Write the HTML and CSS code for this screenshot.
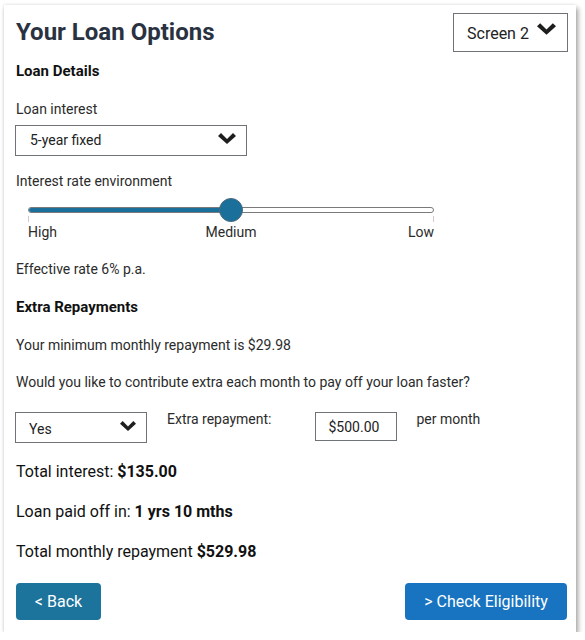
FILE: index.html
```html
<!DOCTYPE html>
<html lang="en">
<head>
<meta charset="utf-8">
<title>Your Loan Options</title>
<link rel="stylesheet" href="styles.css">
</head>
<body>
<main class="card">
  <header class="header">
    <h1 class="title">Your Loan Options</h1>
    <div class="select screen-select">
      <span>Screen 2</span>
      <svg class="chev chev-lg" viewBox="0 0 18 11"><polygon points="0,3 3,0 9,6 15,0 18,3 9,11"/></svg>
    </div>
  </header>

  <h2 class="section">Loan Details</h2>

  <p class="label first">Loan interest</p>
  <div class="select interest-select">
    <span>5-year fixed</span>
    <svg class="chev" viewBox="0 0 18 11"><polygon points="0,3 3,0 9,6 15,0 18,3 9,11"/></svg>
  </div>

  <p class="label env">Interest rate environment</p>
  <div class="slider">
    <div class="track"><div class="fill" style="width: 50%"></div></div>
    <span class="tick tick-l"></span>
    <span class="tick tick-r"></span>
    <span class="thumb" style="left: 50%"></span>
  </div>
  <div class="scale">
    <span>High</span>
    <span>Medium</span>
    <span class="low">Low</span>
  </div>

  <p class="label rate">Effective rate 6% p.a.</p>

  <h2 class="section extra">Extra Repayments</h2>
  <p class="label minimum">Your minimum monthly repayment is $29.98</p>
  <p class="label question">Would you like to contribute extra each month to pay off your loan faster?</p>

  <div class="extra-row">
    <div class="select yes-select">
      <span>Yes</span>
      <svg class="chev" viewBox="0 0 18 11"><polygon points="0,3 3,0 9,6 15,0 18,3 9,11"/></svg>
    </div>
    <span class="row-label">Extra repayment:</span>
    <div class="amount">$500.00</div>
    <span class="row-label per">per month</span>
  </div>

  <p class="summary first-sum">Total interest: <b>$135.00</b></p>
  <p class="summary">Loan paid off in: <b>1 yrs 10 mths</b></p>
  <p class="summary">Total monthly repayment <b>$529.98</b></p>

  <footer class="actions">
    <button class="btn btn-back">&lt; Back</button>
    <button class="btn btn-next">&gt; Check Eligibility</button>
  </footer>
</main>
</body>
</html>
```

FILE: styles.css
```css
* { box-sizing: border-box; }

body {
  margin: 0;
  padding: 5px 0 0 4px;
  background: #ffffff;
  font-family: Roboto, "Liberation Sans", Arial, sans-serif;
  color: #222222;
}

.card {
  width: 572px;
  height: 627px;
  padding: 8px 8px 0 12px;
  background: #ffffff;
  box-shadow: 2px 3px 5px rgba(0, 0, 0, 0.38), -1px -1px 2px rgba(0, 0, 0, 0.06);
}

.header {
  display: flex;
  justify-content: space-between;
  align-items: flex-start;
}

.title {
  margin: 4px 0 0;
  font-size: 24px;
  line-height: 30px;
  font-weight: 700;
  color: #2a3241;
}

.select {
  display: flex;
  align-items: center;
  justify-content: space-between;
  border: 1px solid #6f7378;
  background: #fff;
  color: #222;
}

.chev { fill: #1e1e1e; display: block; }

.screen-select {
  width: 115px;
  height: 39px;
  padding: 1px 11px 0 13px;
  font-size: 16px;
}
.chev-lg { width: 19px; height: 12px; margin-top: -8px; }

.section {
  margin: 10px 0 0;
  font-size: 15px;
  line-height: 18px;
  font-weight: 700;
  color: #111;
}

.label {
  margin: 0;
  font-size: 14px;
  line-height: 17px;
  color: #2b2b2b;
}
.label.first { margin-top: 21px; }

.interest-select {
  margin: 7px 0 0 -1px;
  width: 232px;
  height: 31px;
  padding: 0 10px 0 14px;
  font-size: 14px;
}
.interest-select span { margin-top: -1px; }
.interest-select .chev { width: 18px; height: 11px; margin-top: -4px; }

.label.env { margin-top: 17px; }

.slider {
  position: relative;
  margin: 8px 0 0 12px;
  width: 406px;
  height: 24px;
}
.track {
  position: absolute;
  left: 0;
  right: 0;
  top: 9px;
  height: 6px;
  border: 1px solid #7a7a7a;
  border-radius: 3px;
  background: #fff;
  overflow: hidden;
}
.fill {
  height: 100%;
  background: #1b6f9b;
}
.tick {
  position: absolute;
  top: 18px;
  width: 1px;
  height: 6px;
  background: #d9c7cc;
}
.tick-l { left: 0; }
.tick-r { right: 0; }
.thumb {
  position: absolute;
  top: 0;
  width: 24px;
  height: 24px;
  margin-left: -12px;
  border-radius: 50%;
  background: #1b6f9b;
  border: 1px solid #4f6b7c;
}

.scale {
  display: grid;
  grid-template-columns: 1fr auto 1fr;
  margin: 2px 0 0 12px;
  width: 406px;
  font-size: 14px;
  line-height: 17px;
  color: #2b2b2b;
}
.scale .low { text-align: right; }

.label.rate { margin-top: 20px; }
.section.extra { margin-top: 20px; }
.label.minimum { margin-top: 21px; }
.label.question { margin-top: 20px; }

.extra-row {
  display: flex;
  align-items: flex-start;
  margin-top: 21px;
}
.yes-select {
  margin-left: -1px;
  width: 132px;
  height: 31px;
  padding: 0 10px 0 13px;
  font-size: 14px;
}
.yes-select span { padding-top: 2px; }
.yes-select .chev { width: 16px; height: 10px; margin-top: -3px; }

.row-label {
  margin: -1px 0 0 20px;
  font-size: 14px;
  line-height: 17px;
  color: #2b2b2b;
}
.amount {
  margin-left: 44px;
  width: 82px;
  height: 29px;
  border: 1px solid #6f7378;
  padding: 6px 0 0 12px;
  font-size: 14px;
  line-height: 17px;
  color: #222;
}
.row-label.per { margin-left: 19px; }

.summary {
  margin: 21px 0 0;
  font-size: 16px;
  line-height: 19px;
  color: #111;
}
.summary.first-sum { margin-top: 19px; }
.summary b { font-weight: 700; }

.actions {
  display: flex;
  justify-content: space-between;
  margin-top: 22px;
  padding-right: 1px;
}
.btn {
  height: 37px;
  border: none;
  border-radius: 4px;
  color: #ffffff;
  font-family: Roboto, "Liberation Sans", Arial, sans-serif;
  font-size: 16px;
  padding: 0;
}
.btn-back { width: 85px; background: #1c739c; }
.btn-next { width: 162px; background: #1874c1; }
```
